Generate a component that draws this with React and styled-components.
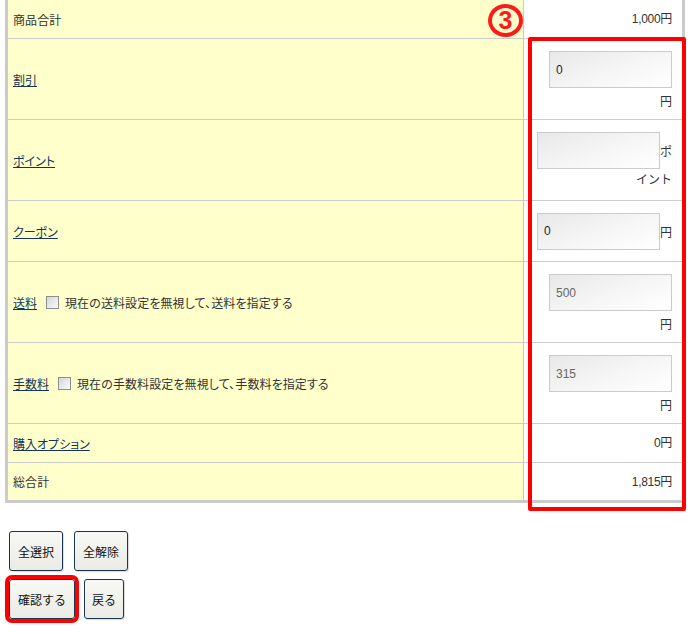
import React from "react";
import styled, { createGlobalStyle } from "styled-components";

const GlobalStyle = createGlobalStyle`
  *, *::before, *::after {
    box-sizing: border-box;
  }
  html, body {
    margin: 0;
    padding: 0;
    background: #fff;
  }
  body {
    font-family: "Liberation Sans", "Noto Sans CJK JP", sans-serif;
    font-size: 12px;
    color: #333;
  }
`;

const Page = styled.div`
  position: relative;
  width: 693px;
  height: 634px;
  overflow: hidden;
`;

const Table = styled.div`
  margin-left: 5px;
  width: 680px;
  border-left: 3px solid #cbcbcb;
  border-right: 3px solid #cbcbcb;
  border-bottom: 3px solid #cbcbcb;
`;

const Row = styled.div`
  display: grid;
  grid-template-columns: 516px 1fr;
  height: ${(p) => p.$h}px;
  border-bottom: ${(p) => (p.$last ? "none" : "1px solid #cccccc")};
`;

const LabelCell = styled.div`
  background: #ffffcc;
  border-right: 1px solid #c8c8c8;
  display: flex;
  align-items: center;
  padding-left: 5px;
`;

const ValueCell = styled.div`
  background: #fff;
  display: flex;
  justify-content: flex-end;
  align-items: ${(p) => (p.$top ? "flex-start" : "center")};
  padding: ${(p) => (p.$top ? "12px 10px 0 0" : "0 10px 0 0")};
  line-height: 18px;
`;

const Link = styled.a`
  color: #123456;
  text-decoration: underline;
  cursor: pointer;
  font-family: "Noto Sans CJK JP", sans-serif;
  font-feature-settings: "palt";
`;

const Plain = styled.span`
  font-family: "Noto Sans CJK JP", sans-serif;
  font-feature-settings: "palt";
  letter-spacing: 0.1px;
`;

const Check = styled.input.attrs({ type: "checkbox" })`
  appearance: none;
  width: 13px;
  height: 13px;
  margin: 0 6px 0 9px;
  border: 1px solid #8e8e8e;
  background: linear-gradient(135deg, #d6d6d6, #fbfbfb);
`;

const InputBox = styled.div`
  width: 136px;
  text-align: right;
  line-height: 18px;
`;

const Field = styled.input`
  width: 123px;
  height: 37px;
  border: 1px solid #cbcbcb;
  background: linear-gradient(160deg, #e8e8e8 0%, #f6f6f6 55%, #ffffff 100%);
  padding: 0 6px;
  margin: 0;
  font-family: "Liberation Sans", sans-serif;
  font-size: 12px;
  color: ${(p) => (p.disabled ? "#666" : "#1f1f3a")};
  vertical-align: middle;
  outline: none;
`;

const Unit = styled.span`
  font-family: "Noto Sans CJK JP", sans-serif;
  vertical-align: middle;
`;

const UnitLine = styled.div`
  margin-top: 4px;
  font-family: "Noto Sans CJK JP", sans-serif;
`;

const Amount = styled.span`
  letter-spacing: -0.3px;
`;

const Annotation = styled.div`
  position: absolute;
  left: ${(p) => p.$x}px;
  top: ${(p) => p.$y}px;
  width: ${(p) => p.$w}px;
  height: ${(p) => p.$h}px;
  border: 4px solid #ff0000;
  border-radius: 2px;
  pointer-events: none;
`;

const Marker = styled.div`
  position: absolute;
  left: 488px;
  top: 4px;
  width: 35px;
  height: 33px;
  border: 4px solid #ff1a1a;
  border-radius: 50%;
  color: #ff1a1a;
  font-family: "Liberation Sans", sans-serif;
  font-weight: 700;
  font-size: 25px;
  line-height: 25px;
  text-align: center;
`;

const Buttons = styled.div`
  margin: 28px 0 0 9px;
  display: flex;
  flex-direction: column;
  gap: 8px;
`;

const ButtonRow = styled.div`
  display: flex;
  gap: ${(p) => p.$gap}px;
`;

const Button = styled.button`
  height: 40px;
  padding: 0 ${(p) => p.$pad || 8}px;
  border: 1px solid #1d344d;
  border-radius: 3px;
  background: linear-gradient(#f8f8f4, #ebebe6);
  box-shadow: 1px 1px 1px rgba(0, 0, 0, 0.15);
  font-family: "Noto Sans CJK JP", sans-serif;
  font-size: 12px;
  color: #111;
  outline: ${(p) => (p.$marked ? "4px solid #ff0000" : "none")};
  outline-offset: 0;
  cursor: pointer;
`;

const StackedInput = ({ value, disabled }) => (
  <InputBox>
    <Field defaultValue={value} disabled={disabled} />
    <UnitLine>円</UnitLine>
  </InputBox>
);

export default function App() {
  return (
    <Page>
      <GlobalStyle />
      <Table>
        <Row $h={39}>
          <LabelCell>
            <Plain>商品合計</Plain>
          </LabelCell>
          <ValueCell>
            <Amount>1,000円</Amount>
          </ValueCell>
        </Row>
        <Row $h={81}>
          <LabelCell>
            <Link>割引</Link>
          </LabelCell>
          <ValueCell $top>
            <StackedInput value="0" />
          </ValueCell>
        </Row>
        <Row $h={81}>
          <LabelCell>
            <Link>ポイント</Link>
          </LabelCell>
          <ValueCell $top>
            <InputBox>
              <Field defaultValue="" />
              <Unit>ポイント</Unit>
            </InputBox>
          </ValueCell>
        </Row>
        <Row $h={61}>
          <LabelCell>
            <Link>クーポン</Link>
          </LabelCell>
          <ValueCell>
            <InputBox>
              <Field defaultValue="0" />
              <Unit>円</Unit>
            </InputBox>
          </ValueCell>
        </Row>
        <Row $h={81}>
          <LabelCell>
            <Link>送料</Link>
            <Check />
            <Plain>現在の送料設定を無視して、送料を指定する</Plain>
          </LabelCell>
          <ValueCell $top>
            <StackedInput value="500" disabled />
          </ValueCell>
        </Row>
        <Row $h={81}>
          <LabelCell>
            <Link>手数料</Link>
            <Check />
            <Plain>現在の手数料設定を無視して、手数料を指定する</Plain>
          </LabelCell>
          <ValueCell $top>
            <StackedInput value="315" disabled />
          </ValueCell>
        </Row>
        <Row $h={39}>
          <LabelCell>
            <Link>購入オプション</Link>
          </LabelCell>
          <ValueCell>
            <Amount>0円</Amount>
          </ValueCell>
        </Row>
        <Row $h={37} $last>
          <LabelCell>
            <Plain>総合計</Plain>
          </LabelCell>
          <ValueCell>
            <Amount>1,815円</Amount>
          </ValueCell>
        </Row>
      </Table>

      <Buttons>
        <ButtonRow $gap={11}>
          <Button>全選択</Button>
          <Button>全解除</Button>
        </ButtonRow>
        <ButtonRow $gap={9}>
          <Button $marked>確認する</Button>
          <Button $pad={7}>戻る</Button>
        </ButtonRow>
      </Buttons>

      <Marker>3</Marker>
      <Annotation $x={528} $y={37} $w={158} $h={474} />
    </Page>
  );
}
